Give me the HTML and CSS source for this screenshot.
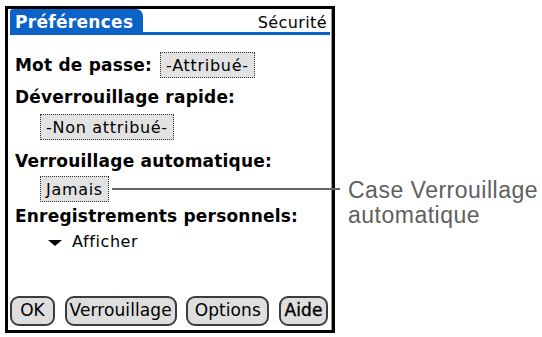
FILE: index.html
```html
<!DOCTYPE html>
<html lang="fr">
<head>
<meta charset="utf-8">
<title>Préférences – Sécurité</title>
<link rel="stylesheet" href="styles.css">
</head>
<body>
<div class="page">
  <div class="device">
    <div class="titlebar">
      <div class="tab">Préférences</div>
      <div class="panel-name">Sécurité</div>
    </div>
    <div class="content">
      <div class="row row-pass">
        <span class="label">Mot de passe:</span>
        <span class="popup">-Attribué-</span>
      </div>
      <div class="label label-unlock">Déverrouillage rapide:</div>
      <div class="row row-indent row-unlock">
        <span class="popup">-Non attribué-</span>
      </div>
      <div class="label label-auto">Verrouillage automatique:</div>
      <div class="row row-indent row-auto">
        <span class="popup">Jamais</span>
        <span class="leader"></span>
      </div>
      <div class="label label-records">Enregistrements personnels:</div>
      <div class="row row-show">
        <span class="tri"></span>
        <span class="show-text">Afficher</span>
      </div>
    </div>
    <div class="buttons">
      <span class="btn btn-ok">OK</span>
      <span class="btn btn-lock">Verrouillage</span>
      <span class="btn btn-opt">Options</span>
      <span class="btn btn-help">Aide</span>
    </div>
  </div>
  <div class="callout">
    <div class="callout-line">Case Verrouillage</div>
    <div class="callout-line">automatique</div>
  </div>
</div>
</body>
</html>
```
FILE: styles.css
```css
html, body {
  margin: 0;
  padding: 0;
  background: #ffffff;
}

.page {
  display: flex;
  align-items: flex-start;
}

.device {
  margin-left: 5px;
  margin-top: 6px;
  width: 330px;
  height: 327px;
  box-sizing: border-box;
  border: 3px solid #000;
  padding: 0 2px 4px 2px;
  display: flex;
  flex-direction: column;
  box-shadow: inset -1px 0 0 #9a9a9a;
  font-family: "DejaVu Sans", "Liberation Sans", sans-serif;
  color: #000;
}

.titlebar {
  display: flex;
  justify-content: space-between;
  align-items: flex-start;
  height: 23px;
  border-bottom: 3px solid #0b63c8;
}

.tab {
  background: #0b63c8;
  color: #fff;
  font-weight: bold;
  font-size: 17px;
  letter-spacing: 0.3px;
  line-height: 19px;
  padding: 4px 0 0 5px;
  width: 128px;
  height: 19px;
  border-radius: 3px 7px 0 0;
}

.panel-name {
  font-size: 16px;
  letter-spacing: 0.4px;
  line-height: 19px;
  padding: 4px 3px 0 0;
}

.content {
  padding: 0 5px;
  display: flex;
  flex-direction: column;
  align-items: flex-start;
}

.label {
  font-weight: bold;
  font-size: 17px;
  letter-spacing: 0.2px;
  line-height: 24px;
  white-space: nowrap;
}

.row {
  display: flex;
  align-items: center;
}

.row-pass {
  margin-top: 17px;
  gap: 8px;
}

.popup {
  display: inline-block;
  box-sizing: border-box;
  height: 26px;
  padding: 3px 5px 0 5px;
  line-height: 20px;
  border: 1px dotted #333;
  background: #e2e2e2;
  font-size: 16px;
  letter-spacing: 0.7px;
  white-space: nowrap;
}

.label-unlock {
  margin-top: 7px;
}

.row-indent {
  margin-left: 25px;
}

.row-unlock {
  margin-top: 5px;
}

.label-auto {
  margin-top: 9px;
}

.row-auto {
  margin-top: 3px;
  align-self: stretch;
  margin-right: -15px;
}

.leader {
  flex: 1;
  height: 2px;
  background: #666;
  margin-left: 3px;
}

.label-records {
  margin-top: 2px;
}

.row-show {
  margin-left: 33px;
  margin-top: 2px;
  height: 24px;
  gap: 10px;
}

.tri {
  width: 0;
  height: 0;
  border-left: 7px solid transparent;
  border-right: 7px solid transparent;
  border-top: 6px solid #000;
  margin-top: 1px;
}

.show-text {
  font-size: 16px;
  letter-spacing: 0.6px;
  line-height: 24px;
}

.buttons {
  margin-top: auto;
  display: flex;
  justify-content: space-between;
  padding-right: 2px;
}

.btn {
  box-sizing: border-box;
  height: 30px;
  border: 2px solid #3c3c3c;
  border-radius: 9px;
  background: #dedede;
  font-size: 17px;
  letter-spacing: 0.1px;
  line-height: 25px;
  text-align: center;
  white-space: nowrap;
}

.btn-ok { width: 45px; }
.btn-lock { width: 112px; }
.btn-opt { width: 83px; }
.btn-help { width: 49px; -webkit-text-stroke: 0.4px #000; }

.callout {
  margin-left: 13px;
  margin-top: 178px;
  font-family: "Liberation Sans", Arial, sans-serif;
  font-size: 23px;
  letter-spacing: 0.5px;
  color: #5f5f5f;
}

.callout-line {
  line-height: 25px;
}
```
